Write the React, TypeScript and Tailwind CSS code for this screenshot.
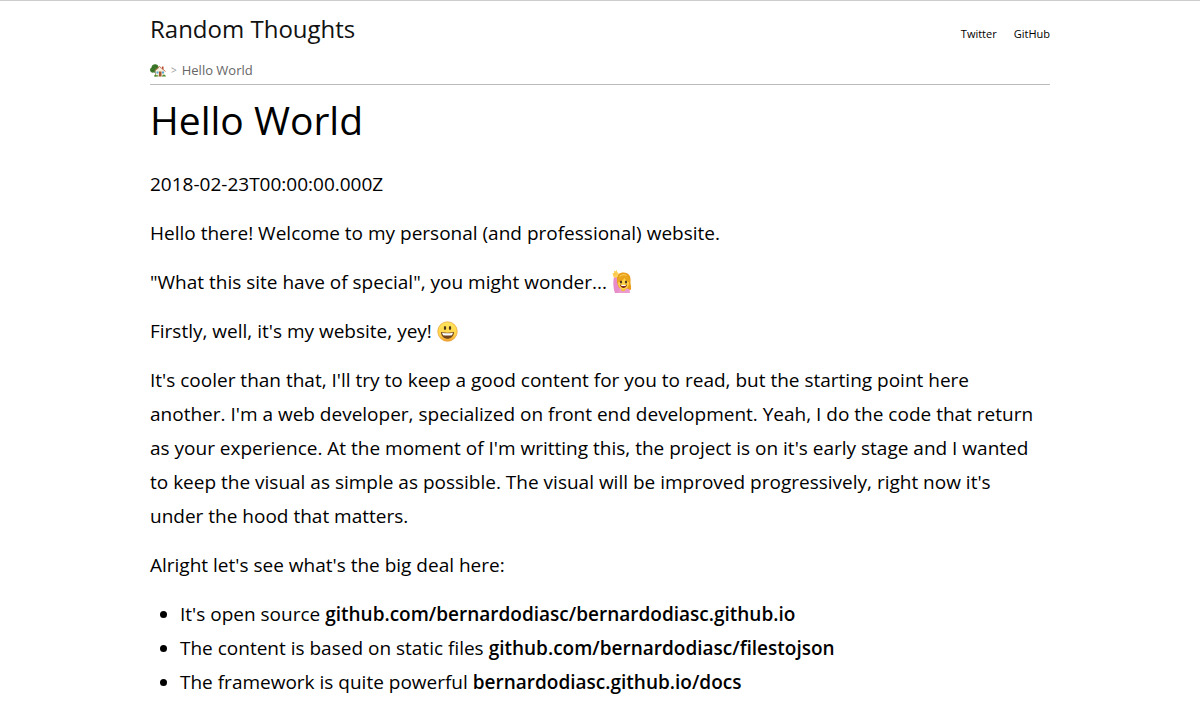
import type { ReactNode } from 'react';

function HouseIcon() {
  return (
    <svg viewBox="0 0 32 26" className="h-[13px] w-4" role="img" aria-label="Home">
      <path d="M10 14h3v11h-3z" fill="#7a4a25" />
      <path d="M8 1C12-1 17 2 17 6c3 2 3 6 0 8-2 4-7 4-9 3-4 1-8-1-8-5 0-2 1-4 3-5 0-3 2-6 5-6z" fill="#3f7c2c" />
      <path d="M4 8c2-2 4-1 5 1M9 3c3 0 4 2 4 4M3 13c2 1 4 0 6-1" fill="none" stroke="#285a1c" strokeWidth="1.6" />
      <path d="M11 13l9-7 9 7v12H11z" fill="#f7efd9" />
      <path d="M24 5h3v7l-3-3z" fill="#b4482f" />
      <path d="M9 14L19 5l12 10" fill="none" stroke="#c4705c" strokeWidth="2" />
      <path d="M13 15h4v4h-4zM24 15h4v4h-4z" fill="#52a9d8" />
      <path d="M18 15h5v10h-5z" fill="#a5572f" />
      <path d="M8 25c0-4 4-5 6-2 2-1 3 0 3 2zM24 25c0-4 7-5 8 0z" fill="#4e8e32" />
    </svg>
  );
}

function RaisedHandIcon() {
  return (
    <svg viewBox="0 0 40 46" className="inline h-[23px] w-5 align-[-4px]" role="img" aria-label="Person raising hand">
      <path d="M9 21C8 9 15 5 23 5c10 0 15 7 14 17-1 6 2 10 1 17-8 5-24 4-29-1 1-6 1-11 0-17z" fill="#e89c18" />
      <path d="M8 46V38c4-3 24-2 27 1l1 7z" fill="#ec9bd0" />
      <path d="M18 35h9v5q-5 5-9 0z" fill="#eebc3c" />
      <ellipse cx="23" cy="26" rx="11" ry="13" fill="#ffd348" />
      <path d="M11 25C11 9 25 7 30 11c4 2 6 7 5 15-5-3-8-6-10-10-3 5-8 8-14 9z" fill="#eba51c" />
      <path d="M15 13c4-4 10-5 14-2" fill="none" stroke="#ffd760" strokeWidth="2" />
      <ellipse cx="18" cy="24" rx="2.2" ry="3" fill="#4c351e" />
      <ellipse cx="28" cy="24" rx="2.2" ry="3" fill="#4c351e" />
      <path d="M16 29q7 2 14 0c-1 9-13 9-14 0z" fill="#7d2a1b" />
      <path d="M18 30h10l-1 2h-8z" fill="#fff" />
      <path d="M4 14l6-1c-1 8 0 16 5 24l-3 9H6C2 35 2 22 4 14z" fill="#e88dc9" />
      <path d="M3 14L1 7c0-2 2-2 3 0V3c0-2 2-2 3 0l1-2c1-1 3 0 2 2l1 2c2 0 2 1 2 3l-2 6c-3 2-6 2-8 0z" fill="#ffd45a" />
      <path d="M5 7v4M8 5v5" stroke="#dfa02d" strokeWidth=".8" />
    </svg>
  );
}

function GrinningIcon() {
  return (
    <svg viewBox="0 0 42 42" className="inline size-[21px] align-[-4px]" role="img" aria-label="Grinning face">
      <defs>
        <linearGradient id="face" x1="0" y1="0" x2="0" y2="1">
          <stop offset="0" stopColor="#ffe45c" />
          <stop offset=".65" stopColor="#ffd54c" />
          <stop offset="1" stopColor="#f2a02b" />
        </linearGradient>
      </defs>
      <circle cx="21" cy="21" r="19.5" fill="url(#face)" stroke="#e8a13a" strokeWidth="1.4" />
      <ellipse cx="16" cy="14" rx="2.4" ry="4.2" fill="#4d3518" />
      <ellipse cx="26" cy="14" rx="2.4" ry="4.2" fill="#4d3518" />
      <path d="M8 22q13 3 26 0c0 18-26 18-26 0z" fill="#70451b" />
      <path d="M10 23.500q11 2 22 0l-2 5q-9 1-18 0z" fill="#fff" />
    </svg>
  );
}

const projects = [
  { text: "It's open source", link: 'github.com/bernardodiasc/bernardodiasc.github.io' },
  { text: 'The content is based on static files', link: 'github.com/bernardodiasc/filestojson' },
  { text: 'The framework is quite powerful', link: 'bernardodiasc.github.io/docs' },
];

function Paragraph({ children }: { children: ReactNode }) {
  return <p className="mb-[15px]">{children}</p>;
}

export default function App() {
  return (
    <div className="min-h-screen border-t border-[#ccc] bg-white px-5 font-['Open_Sans',sans-serif] text-[19px]/[34px] text-black">
      <div className="mx-auto max-w-[900px]">
        <header className="border-b border-[#bbb] pb-[3px]">
          <div className="flex items-start justify-between pt-2">
            <a href="/" className="text-2xl/10 text-[#111]">Random Thoughts</a>
            <nav className="flex gap-[17px] pt-2 text-[11px]/[34px]">
              <a href="https://twitter.com/bernardodiasc">Twitter</a>
              <a href="https://github.com/bernardodiasc">GitHub</a>
            </nav>
          </div>
          <nav aria-label="Breadcrumb" className="flex items-center gap-[5px] pt-2 text-[13px]/[22px] text-[#666]">
            <a href="/"><HouseIcon /></a>
            <span className="text-[10px] text-[#999]">&gt;</span>
            <a href="/hello-world">Hello World</a>
          </nav>
        </header>
        <main>
          <h1 className="mb-[19px] pt-[7px] text-[39px]/[56px]">Hello World</h1>
          <Paragraph>2018-02-23T00:00:00.000Z</Paragraph>
          <Paragraph>Hello there! Welcome to my personal (and professional) website.</Paragraph>
          <Paragraph>"What this site have of special", you might wonder... <RaisedHandIcon /></Paragraph>
          <Paragraph>Firstly, well, it's my website, yey! <GrinningIcon /></Paragraph>
          <Paragraph>
            It's cooler than that, I'll try to keep a good content for you to read, but the starting point here
            <br />
            another. I'm a web developer, specialized on front end development. Yeah, I do the code that return
            <br />
            as your experience. At the moment of I'm writting this, the project is on it's early stage and I wanted
            <br />
            to keep the visual as simple as possible. The visual will be improved progressively, right now it's
            <br />
            under the hood that matters.
          </Paragraph>
          <Paragraph>Alright let's see what's the big deal here:</Paragraph>
          <ul className="list-disc pl-[30px]">
            {projects.map(({ text, link }) => (
              <li key={link}>
                {text} <a href={`https://${link}`} className="font-semibold">{link}</a>
              </li>
            ))}
          </ul>
        </main>
      </div>
    </div>
  );
}
